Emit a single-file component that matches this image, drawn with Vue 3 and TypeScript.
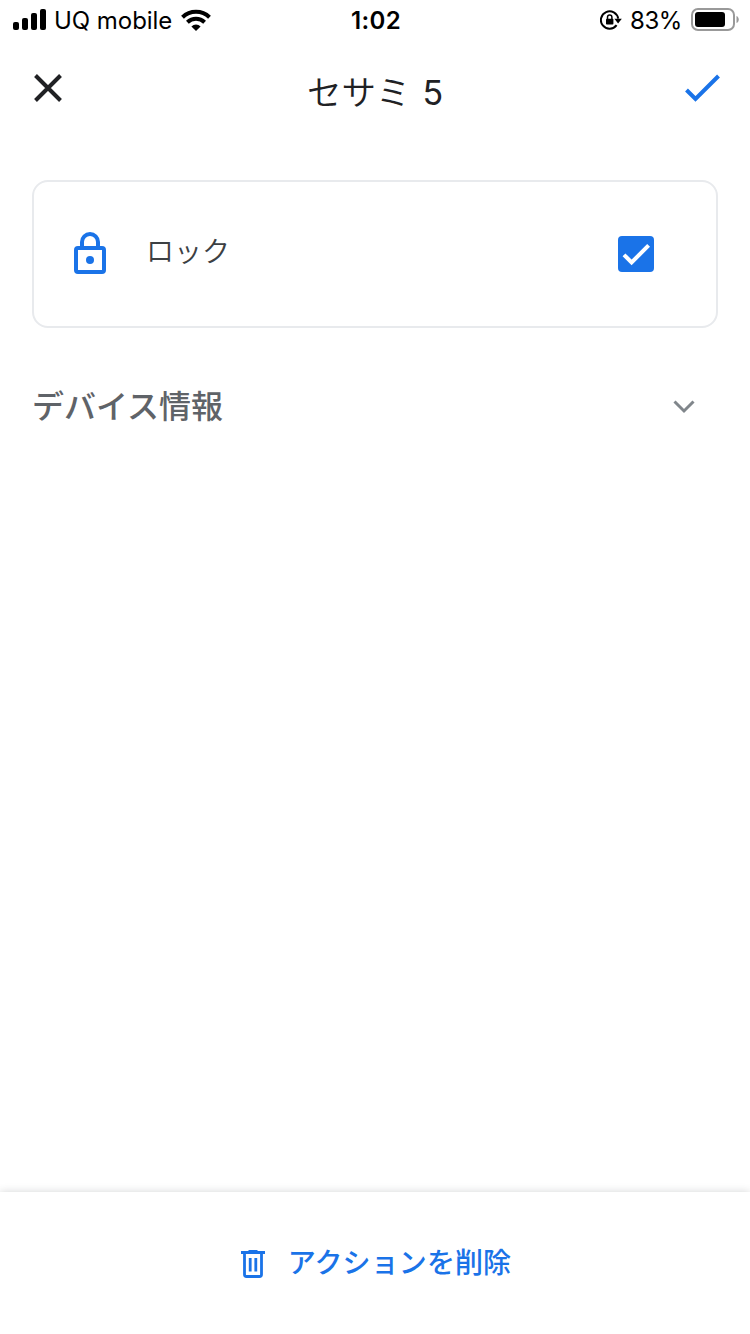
<script setup lang="ts">
import { ref } from 'vue'

const title = 'セサミ'
const titleNumber = '5'
const locked = ref(true)
const expanded = ref(false)
const battery = 83
</script>

<template>
  <div class="screen">
    <header class="status">
      <div class="status-left">
        <svg class="signal" width="34" height="22" viewBox="0 0 34 22" aria-hidden="true">
          <rect x="0" y="13" width="6" height="8" rx="2" />
          <rect x="9" y="9" width="6" height="12" rx="2" />
          <rect x="18" y="4" width="6" height="17" rx="2" />
          <rect x="27" y="0" width="6" height="21" rx="2" />
        </svg>
        <span class="carrier">UQ mobile</span>
        <svg class="wifi" width="30" height="23" viewBox="0 0 30 23" aria-hidden="true">
          <path d="M1.500 8.200a19.500 19.500 0 0 1 27 0" />
          <path d="M6.400 13.300a12.500 12.500 0 0 1 17.200 0" />
          <path class="dot" d="M15 22l-4.600-4.600a6.500 6.500 0 0 1 9.200 0z" />
        </svg>
      </div>
      <time class="clock">1:02</time>
      <div class="status-right">
        <svg class="rotation" width="22" height="20" viewBox="0 0 22 20" aria-hidden="true">
          <path class="ring" d="M16.600 15.200a8.700 8.700 0 1 1 1.600-6.500" />
          <path d="M14.400 8.800h7.400l-3.700 4.700z" />
          <rect x="6" y="8.800" width="7.400" height="5.800" rx=".8" />
          <path class="shackle" d="M7.500 9V7.200a2.200 2.200 0 0 1 4.400 0V9" />
        </svg>
        <span class="percent">{{ battery }}%</span>
        <svg class="battery" width="48" height="23" viewBox="0 0 48 23" aria-hidden="true">
          <rect class="shell" x="1" y="1" width="42" height="21" rx="6" />
          <rect x="4" y="4" width="30" height="15" rx="3" />
          <path class="tip" d="M45.500 8c3 1 3 6 0 7z" />
        </svg>
      </div>
    </header>

    <nav class="toolbar">
      <button class="icon-button" aria-label="閉じる">
        <svg width="28" height="28" viewBox="0 0 28 28"><path class="close" d="M1.500 1.500l25 25M26.500 1.500l-25 25" /></svg>
      </button>
      <h1 class="title"><span>{{ title }}</span><span class="title-number">{{ titleNumber }}</span></h1>
      <button class="icon-button" aria-label="保存">
        <svg width="36" height="28" viewBox="0 0 36 28"><path class="save" d="M1.500 16l9 9L33.500 2" /></svg>
      </button>
    </nav>

    <main>
      <section class="card" @click="locked = !locked">
        <svg class="lock" width="32" height="42" viewBox="0 0 32 42" aria-hidden="true">
          <rect x="2" y="16" width="28" height="24" rx="2" />
          <path d="M8 15v-5a8 8 0 0 1 16 0v5" />
          <circle cx="16" cy="28" r="4" />
        </svg>
        <span class="action">ロック</span>
        <span class="checkbox" role="checkbox" :aria-checked="locked">
          <svg v-if="locked" width="36" height="36" viewBox="0 0 36 36"><path d="M6 18.800l7.600 7.600L30.600 9.400" /></svg>
        </span>
      </section>

      <button class="disclosure" :aria-expanded="expanded" @click="expanded = !expanded">
        <span>デバイス情報</span>
        <svg width="22" height="14" viewBox="0 0 22 14"><path d="M1.500 1.500L11 11l9.500-9.500" /></svg>
      </button>
    </main>

    <footer class="footer">
      <button class="delete">
        <svg width="24" height="28" viewBox="0 0 24 28" aria-hidden="true">
          <path d="M0 2.500h24M7.500 1.200h9M3.500 3v21.500a2 2 0 0 0 2 2h13a2 2 0 0 0 2-2V3M9.200 8v13.500M14.800 8v13.500" />
        </svg>
        <span>アクションを削除</span>
      </button>
    </footer>
  </div>
</template>

<style>
body {
  background: #fff;
}
</style>

<style scoped>
.screen {
  display: flex;
  flex-direction: column;
  width: 750px;
  height: 1334px;
  box-sizing: border-box;
  overflow: hidden;
  background: #fff;
  color: #202124;
  font-family: Inter, "Noto Sans CJK JP", sans-serif;
}

button {
  padding: 0;
  border: 0;
  background: none;
  color: inherit;
  font: inherit;
}

svg {
  display: block;
  flex: none;
}

.status {
  display: grid;
  grid-template-columns: 1fr auto 1fr;
  align-items: center;
  height: 40px;
  padding: 0 11px 0 13px;
  box-sizing: border-box;
  color: #000;
  font-size: 24px;
  line-height: 30px;
}

.status-left,
.status-right {
  display: flex;
  align-items: center;
}

.status-right {
  justify-content: flex-end;
}

.carrier {
  width: 120px;
  margin: 2px 7px 0 7px;
  letter-spacing: -0.05px;
  white-space: nowrap;
}

.wifi path {
  fill: none;
  stroke: #000;
  stroke-width: 4;
}

.wifi .dot {
  fill: #000;
  stroke: none;
}

.clock {
  margin-top: 2px;
  font-weight: 600;
  letter-spacing: 0.3px;
}

.rotation .ring,
.rotation .shackle {
  fill: none;
  stroke: #000;
  stroke-width: 2;
}

.rotation .shackle {
  stroke-width: 1.5;
}

.percent {
  margin: 2px 9px 0 8px;
  letter-spacing: -0.4px;
}

.battery {
  margin-top: -1px;
}

.battery .shell {
  fill: none;
  stroke: #999;
  stroke-width: 2;
}

.battery .tip {
  fill: #999;
}

.toolbar {
  display: flex;
  align-items: center;
  justify-content: space-between;
  height: 96px;
  padding: 0 29px 0 34px;
}

.close,
.save {
  fill: none;
  stroke: #202124;
  stroke-width: 4;
}

.save {
  stroke: #1a73e8;
}

.title {
  display: flex;
  align-items: baseline;
  gap: 12px;
  margin: 9px 0 0 3px;
  font-size: 34.5px;
  font-weight: 350;
  line-height: 48px;
}

.title-number {
  font-size: 34px;
  font-weight: 400;
}

.card {
  display: flex;
  align-items: center;
  height: 148px;
  margin: 44px 32px 0;
  padding: 0 62px 0 40px;
  border: 2px solid #e8eaed;
  border-radius: 16px;
  box-sizing: border-box;
}

.lock {
  margin-top: -2px;
}

.lock rect,
.lock path {
  fill: none;
  stroke: #1a73e8;
  stroke-width: 4;
}

.lock circle {
  fill: #1a73e8;
}

.action {
  flex: 1;
  margin: -8px 0 0 40px;
  color: #3c4043;
  font-size: 28px;
  font-weight: 350;
}

.checkbox {
  width: 36px;
  height: 36px;
  border-radius: 4px;
  background: #1a73e8;
}

.checkbox path {
  fill: none;
  stroke: #fff;
  stroke-width: 4;
}

.disclosure {
  display: flex;
  align-items: center;
  justify-content: space-between;
  width: 100%;
  height: 60px;
  margin-top: 48px;
  padding: 0 55px 0 32px;
  color: #5f6368;
  font-size: 32px;
  font-weight: 500;
}

.disclosure span {
  margin-top: -4px;
}

.disclosure svg {
  margin-top: 2px;
}

.disclosure path {
  fill: none;
  stroke: #80868b;
  stroke-width: 3;
}

.footer {
  display: flex;
  justify-content: center;
  height: 142px;
  margin-top: auto;
  background: #fff;
  box-shadow: 0 0 8px rgba(60, 64, 67, 0.22);
}

.delete {
  display: flex;
  align-items: center;
  gap: 23px;
  height: 142px;
  margin-left: 2px;
  color: #1a73e8;
  font-size: 28px;
  font-weight: 500;
}

.delete span {
  margin-top: -5px;
  letter-spacing: 0.1px;
}

.delete svg {
  margin-top: 1px;
}

.delete path {
  fill: none;
  stroke: #1a73e8;
  stroke-width: 2.8;
}
</style>
